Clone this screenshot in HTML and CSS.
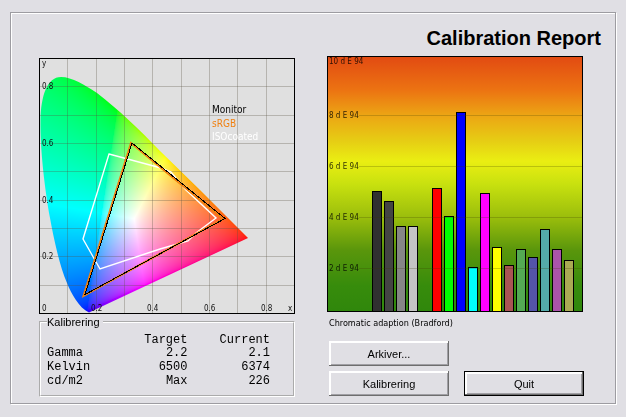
FILE: index.html
```html
<!DOCTYPE html>
<html lang="en">
<head>
<meta charset="utf-8">
<title>Calibration Report</title>
<link rel="stylesheet" href="styles.css">
</head>
<body>
<main class="frame">
  <h1 class="title">Calibration Report</h1>
  <div class="columns">
    <section class="left">
      <div class="gamut">
        <canvas class="gamut-fill" id="gamut" width="256" height="256"></canvas>
        <svg class="gamut-plot" viewBox="0 0 256 256">
          <path class="grid" d="M28.5 1V255M57.5 1V255M85.5 1V255M113.5 1V255M142.5 1V255M170.5 1V255M198.5 1V255M227.5 1V255M1 28.5H255M1 57.5H255M1 85.5H255M1 113.5H255M1 142.5H255M1 170.5H255M1 198.5H255M1 227.5H255"/>
          <path class="line iso" d="M70 96L122 110L132 114L147 132L177 160L157 175L149 183L121 191L61 211L44 181Z"/>
          <path class="line srgb" d="M92 85L184 161L44.500 238Z"/>
          <path class="line monitor" d="M93 85L186 160.500L46 236.500Z"/>
          <g class="tick">
            <text x="3" y="8">y</text>
            <text x="3" y="31">0.8</text>
            <text x="3" y="88">0.6</text>
            <text x="3" y="145">0.4</text>
            <text x="3" y="201">0.2</text>
            <text x="3" y="253">0</text>
            <text x="52" y="253">0.2</text>
            <text x="108" y="253">0.4</text>
            <text x="165" y="253">0.6</text>
            <text x="222" y="253">0.8</text>
            <text x="249" y="253">x</text>
          </g>
          <g class="legend">
            <text x="173" y="55">Monitor</text>
            <text class="legend-srgb" x="173" y="69">sRGB</text>
            <text class="legend-iso" x="173" y="82">ISOcoated</text>
          </g>
          <rect class="edge" x="0.5" y="0.5" width="255" height="255"/>
        </svg>
      </div>
      <fieldset class="group">
        <legend>Kalibrering</legend>
        <table class="values">
          <thead><tr><td></td><th scope="col">Target</th><th scope="col">Current</th></tr></thead>
          <tbody>
            <tr><th scope="row">Gamma</th><td>2.2</td><td>2.1</td></tr>
            <tr><th scope="row">Kelvin</th><td>6500</td><td>6374</td></tr>
            <tr><th scope="row">cd/m2</th><td>Max</td><td>226</td></tr>
          </tbody>
        </table>
      </fieldset>
    </section>
    <section class="right">
      <div class="delta">
        <div class="scale">
          <span class="mark top">10 d E 94</span>
          <span class="mark">8 d E 94</span>
          <span class="mark">6 d E 94</span>
          <span class="mark">4 d E 94</span>
          <span class="mark">2 d E 94</span>
        </div>
        <div class="bars">
          <i style="height:121px;background:#303030"></i>
          <i style="height:111px;background:#444"></i>
          <i style="height:86px;background:#868686"></i>
          <i style="height:86px;background:#c4c4c4"></i>
          <i class="split" style="height:124px;background:#f00"></i>
          <i style="height:96px;background:#0f0"></i>
          <i style="height:200px;background:#00f"></i>
          <i style="height:45px;background:#0ff"></i>
          <i style="height:119px;background:#f0f"></i>
          <i style="height:65px;background:#ff0"></i>
          <i style="height:47px;background:#aa5454"></i>
          <i style="height:63px;background:#54aa54"></i>
          <i style="height:55px;background:#5454aa"></i>
          <i style="height:83px;background:#54aaaa"></i>
          <i style="height:63px;background:#aa54aa"></i>
          <i style="height:52px;background:#aaaa54"></i>
        </div>
      </div>
      <p class="caption">Chromatic adaption (Bradford)</p>
      <div class="actions">
        <button type="button" class="first">Arkiver...</button>
        <button type="button">Kalibrering</button>
        <button type="button" class="default">Quit</button>
      </div>
    </section>
  </div>
</main>
<script src="gamut.js"></script>
</body>
</html>
```
FILE: styles.css
```css
* { box-sizing: border-box; }

body {
  margin: 0;
  background: #e0dfe4;
  color: #000;
  font: 11px/14px "Liberation Sans", Arial, sans-serif;
}

.frame {
  margin: 12px 10px;
  padding: 12px 32px 6px 28px;
  border: 1px solid #9d9ca1;
  box-shadow: inset 1px 1px #fff, 1px 1px #fff;
}

.title {
  margin: 0 -18px 6px 0;
  padding-top: 1px;
  font-size: 20px;
  line-height: 24px;
  text-align: right;
}

.columns {
  display: grid;
  grid-template-columns: 1fr 1fr;
  gap: 32px;
}

.left { padding-top: 2px; }

.gamut {
  display: grid;
  background: #e0e0e0;
}
.gamut-fill, .gamut-plot {
  grid-area: 1 / 1;
  display: block;
  width: 100%;
}
.grid { stroke: #555040; stroke-opacity: 0.3; fill: none; }
.line { fill: none; stroke-width: 1; }
.iso { stroke: #fff; stroke-width: 1.4; }
.srgb { stroke: #f08010; stroke-width: 2; }
.monitor { stroke: #000; shape-rendering: crispEdges; }
.edge { fill: none; stroke: #000; }
.tick { font: 8px "DejaVu Sans Condensed", "DejaVu Sans", sans-serif; fill: #111; }
.legend { font: 10px "DejaVu Sans Condensed", "DejaVu Sans", sans-serif; }
.legend-srgb { fill: #f08010; }
.legend-iso { fill: #fff; }

.group {
  margin: 1px 0 0;
  padding: 6px 23px 7px 6px;
  border: 2px groove #fff;
}
.group legend { padding: 0 3px 0 0; line-height: 14px; }

.values {
  width: 100%;
  table-layout: fixed;
  border-collapse: collapse;
  font: 12px/14px "Liberation Mono", "Courier New", monospace;
}
.values th, .values td {
  padding: 0;
  font-weight: normal;
  text-align: right;
}
.values thead { line-height: 11px; }
.values thead td { width: 26%; }
.values tbody th { text-align: left; }

.delta {
  display: grid;
  height: 256px;
  border: 1px solid #000;
  background: linear-gradient(#e24b12, #ec7312 13%, #eca514 23%, #e6cd14 33%, #eaee12 41%, #c8e10f 50%, #9bbe0c 63%, #5a960c 76%, #378c0c 90%, #30870c);
}
.scale, .bars { grid-area: 1 / 1; }
.scale {
  padding-left: 1px;
  font: 8px/9px "DejaVu Sans Condensed", "DejaVu Sans", sans-serif;
}
.mark {
  display: flex;
  align-items: center;
  height: 51px;
  white-space: nowrap;
  opacity: 0.8;
}
.mark::after {
  content: "";
  flex: 1;
  height: 1px;
  background: rgba(60, 60, 0, 0.3);
}
.mark.top { height: 9px; margin-bottom: 24px; }
.mark.top::after { display: none; }

.bars {
  display: flex;
  align-items: flex-end;
  gap: 2px;
  margin-bottom: -1px;
  padding: 0 8px 0 44px;
}
.bars i {
  flex: 1;
  border: 1px solid #000;
}
.bars .split { margin-left: 12px; }

.caption {
  margin: 4px 2px 11px;
  font: 9px/14px "DejaVu Sans Condensed", "DejaVu Sans", sans-serif;
}

.actions {
  display: grid;
  grid-template-columns: 120px 120px;
  justify-content: space-between;
  gap: 5px 15px;
  margin: 0 -1px 0 2px;
}
.first { grid-column: 1 / -1; width: 120px; }

button {
  height: 25px;
  padding: 0;
  border: 0;
  background: #e0dfe4;
  color: #000;
  font: 11px/14px "Liberation Sans", Arial, sans-serif;
  box-shadow: inset -1px -1px #6e6e6e, inset 2px 2px #fff, inset -2px -2px #a09fa4;
}
.default {
  border: 1px solid #000;
}
```
FILE: gamut.js
```js
// Fills the xy locus with the CIE RGB colour of each chromaticity.
const canvas = document.getElementById('gamut');
const ctx = canvas.getContext('2d');
const size = 256;
const unit = 284;
const image = ctx.createImageData(size, size);

const encode = v => Math.pow(v, 1 / 2.2);

for (let py = 0; py < size; py++) {
  for (let px = 0; px < size; px++) {
    const x = px / unit;
    const y = Math.max((255 - py) / unit, 0.001);
    const z = 1 - x - y;
    const rgb = [
      2.3707 * x - 0.9 * y - 0.4706 * z,
      -0.5139 * x + 1.4253 * y + 0.0886 * z,
      0.0053 * x - 0.0147 * y + 1.0094 * z
    ].map(v => Math.max(v, 0));
    const peak = Math.max(...rgb);
    const at = (py * size + px) * 4;
    rgb.forEach((v, i) => { image.data[at + i] = 255 * encode(v / peak); });
    image.data[at + 3] = 255;
  }
}
ctx.putImageData(image, 0, 0);

// Keep only the area inside the spectral locus.
ctx.globalCompositeOperation = 'destination-in';
ctx.fill(new Path2D(
  'M50 254.500 C40 250 32 235 28 225 C21 209 15 182 11 160 ' +
  'C6 132 1 92 1.500 62 C2 38 8 19 22 19 C33 19 46 27 58 35 ' +
  'C80 52 100 71 121 93 L161 132 L209 180 Z'
));
```
